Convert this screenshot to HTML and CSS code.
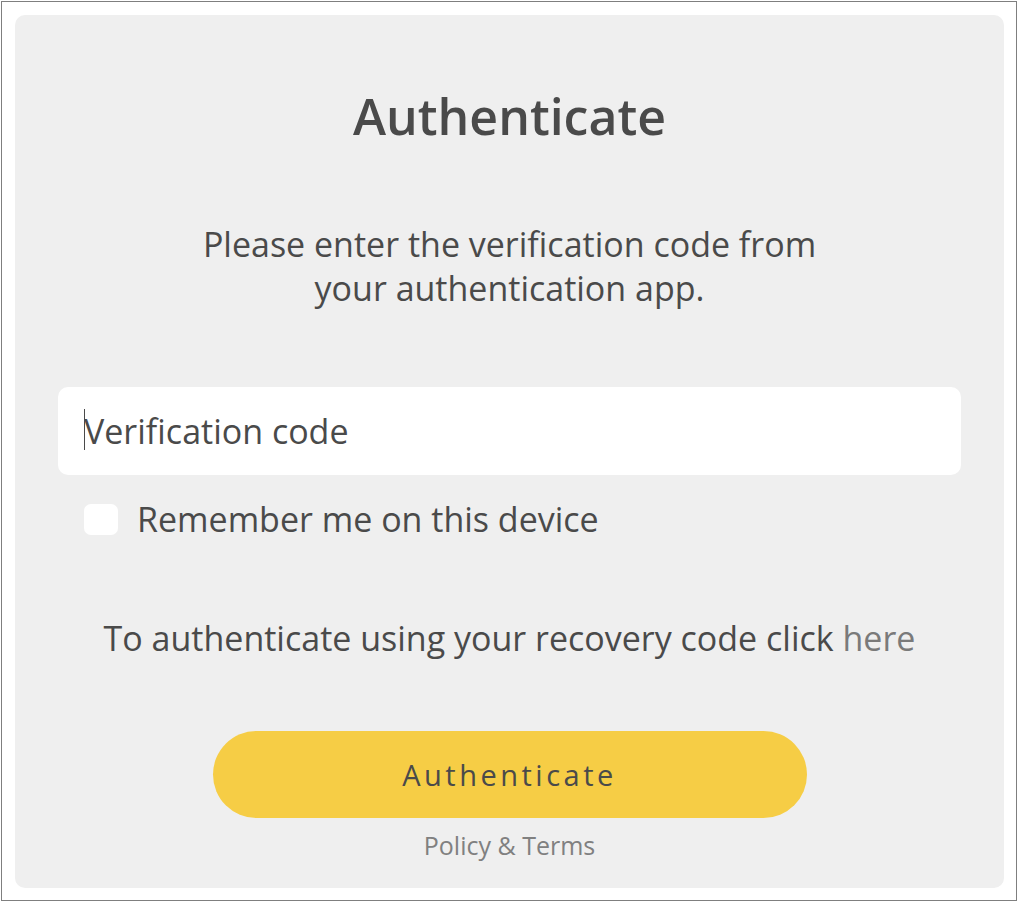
FILE: index.html
```html
<!DOCTYPE html>
<html lang="en">
<head>
    <meta charset="UTF-8">
    <meta name="viewport" content="width=device-width, initial-scale=1.0">
    <title>Authenticate</title>
    <link rel="stylesheet" href="styles.css">
</head>
<body>

    <!-- Outer frame -->
    <div class="frame">
        <div class="card">
            <h1>Authenticate</h1>
            <p class="intro">Please enter the verification code from<br>your authentication app.</p>

            <div class="field">
                <span class="caret"></span>
                <input type="text" class="code-input" placeholder="Verification code">
            </div>

            <label class="remember">
                <span class="check"></span>
                Remember me on this device
            </label>

            <p class="recovery">To authenticate using your recovery code click <a href="#">here</a></p>

            <button class="submit">Authenticate</button>
            <a class="policy" href="#">Policy &amp; Terms</a>
        </div>
    </div>

</body>
</html>
```

FILE: styles.css
```css
body {
    margin: 0;
    background: #fff;
    font-family: 'Open Sans', 'Noto Sans', sans-serif;
    color: #4a4a4a;
}

/* thin gray frame round the whole page */
.frame {
    margin: 1px;
    width: 1016px;
    height: 900px;
    border: 1px solid #7f7f7f;
    padding: 13px 12px 12px 13px;
    box-sizing: border-box;
}

.card {
    background: #efefef;
    border-radius: 10px;
    height: 873px;
    display: flex;
    flex-direction: column;
    align-items: center;
    padding: 0 43px;
}

h1 {
    margin: 69px 0 0;
    font-size: 50px;
    line-height: 64px;
    font-weight: 600;
}

.intro {
    margin: 74px 0 0;
    font-size: 34px;
    line-height: 44px;
    text-align: center;
}

.field {
    position: relative;
    width: 100%;
    margin-top: 77px;
}

.code-input {
    display: block;
    width: 100%;
    height: 88px;
    box-sizing: border-box;
    border: none;
    border-radius: 10px;
    background: #fff;
    padding: 0 26px;
    font-family: inherit;
    font-size: 34px;
    color: #4a4a4a;
    outline: none;
}

.code-input::placeholder {
    color: #4a4a4a;
}

.caret {
    position: absolute;
    left: 26px;
    top: 22px;
    width: 1px;
    height: 41px;
    background: #4a4a4a;
}

.remember {
    align-self: flex-start;
    display: flex;
    align-items: center;
    gap: 19px;
    margin: 24px 0 0 26px;
    font-size: 34px;
    line-height: 40px;
}

.check {
    width: 34px;
    height: 31px;
    border-radius: 7px;
    background: #fff;
}

.recovery {
    margin: 79px 0 0;
    font-size: 34px;
    line-height: 40px;
}

.recovery a {
    color: #7a7a7a;
    text-decoration: none;
}

.submit {
    margin-top: 73px;
    width: 594px;
    height: 87px;
    border: none;
    border-radius: 44px;
    background: #f6cd45;
    color: #4a4a4a;
    font-family: inherit;
    font-size: 29px;
    letter-spacing: 3.5px;
    cursor: pointer;
}

.policy {
    margin-top: 10px;
    font-size: 25px;
    color: #808080;
    text-decoration: none;
}
```
